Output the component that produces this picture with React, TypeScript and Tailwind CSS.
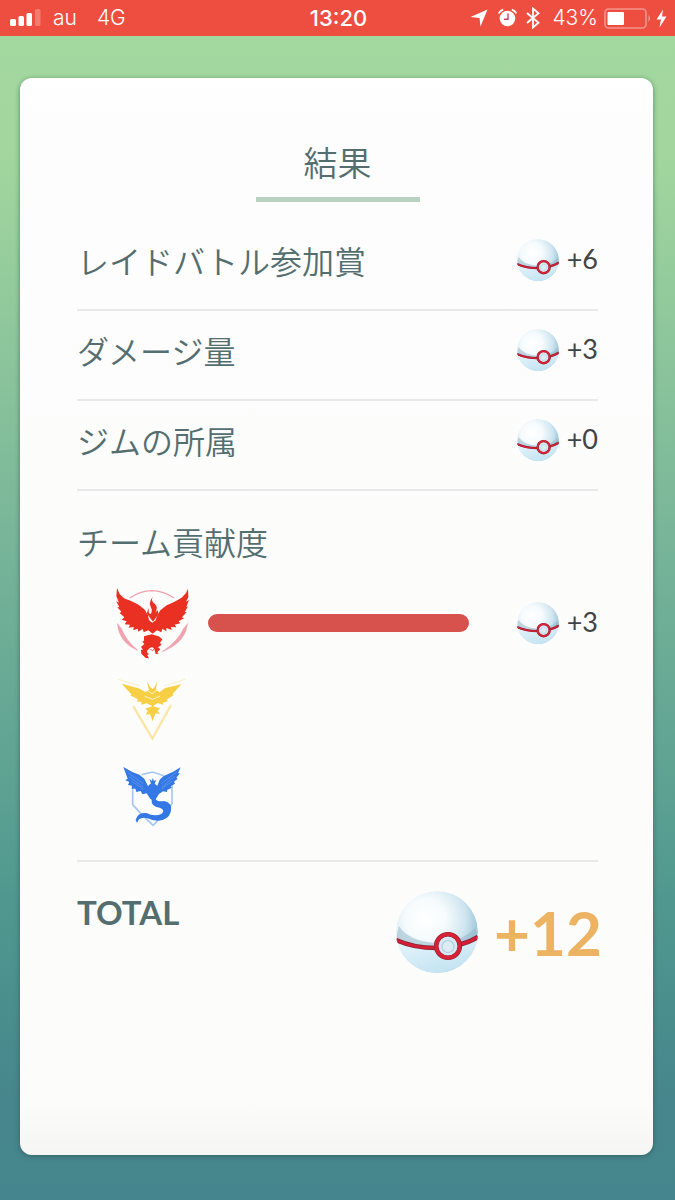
import React, {useId} from 'react';

const rewards = [
  {label: 'レイドバトル参加賞', amount: 6},
  {label: 'ダメージ量', amount: 3},
  {label: 'ジムの所属', amount: 0},
];

const StatusBar = () => (
  <header className="h-9 grid grid-cols-[1fr_auto_1fr] items-center bg-[#ee4e40] pl-[10px] pr-2 text-white text-[21px] leading-6 font-['Inter','Liberation_Sans',sans-serif]">
    <div className="flex items-center">
      <svg width="31" height="18" viewBox="0 0 31 18" fill="currentColor">
        <rect x="0" y="10" width="6" height="7" rx="1.5" />
        <rect x="8.5" y="7" width="5.5" height="10" rx="1.5" />
        <rect x="16.5" y="4" width="5.5" height="13" rx="1.5" />
        <rect x="25" y="0" width="5.5" height="17" rx="1.5" opacity=".25" />
      </svg>
      <span className="ml-3 font-light">au</span>
      <span className="ml-5 font-light">4G</span>
    </div>
    <span className="text-[22px] font-medium">13:20</span>
    <div className="flex items-center justify-end">
      <svg width="18" height="18" viewBox="0 0 18 18" fill="currentColor">
        <path d="M17.5 .5 10.5 17.5 9.5 9 .5 8z" />
      </svg>
      <svg className="ml-[10px]" width="19" height="20" viewBox="0 0 19 20">
        <circle cx="9.5" cy="10.5" r="7.8" fill="currentColor" />
        <path
          d="M.8 5.5Q2 2.5 5.2 1.6M18.2 5.5Q17 2.5 13.8 1.6"
          fill="none"
          stroke="currentColor"
          strokeWidth="1.8"
        />
        <path d="M10 5.5V11.3H6" fill="none" stroke="#c9406a" strokeWidth="1.4" />
      </svg>
      <svg
        className="ml-[9px]"
        width="14"
        height="22"
        viewBox="0 0 14 22"
        fill="none"
        stroke="currentColor"
        strokeWidth="1.8"
      >
        <path d="M1 6 12.5 15.8 7 20.5V1.5L12.5 6.2 1 16" />
      </svg>
      <span className="ml-3 font-light">43%</span>
      <svg className="ml-[6px]" width="48" height="21" viewBox="0 0 48 21">
        <rect
          x="1"
          y="1"
          width="41"
          height="19"
          rx="3.5"
          fill="none"
          stroke="#fff"
          strokeOpacity=".4"
          strokeWidth="1.6"
        />
        <rect x="3.5" y="4" width="16.5" height="13" rx="1" fill="#fff" />
        <path d="M44.5 7Q47.5 10.5 44.5 14z" fill="#fff" fillOpacity=".45" />
      </svg>
      <svg className="ml-1" width="11" height="19" viewBox="0 0 11 19" fill="currentColor">
        <path d="M7 .5 .5 10.5H5L3.5 18.5 10.5 7.5H6z" />
      </svg>
    </div>
  </header>
);

const Ball = ({className}: {className: string}) => {
  const id = useId();
  return (
    <svg className={className} viewBox="0 0 82 82">
      <defs>
        <radialGradient id={`${id}top`} cx=".36" cy=".34" r=".7">
          <stop offset="0" stopColor="#fff" />
          <stop offset=".35" stopColor="#f6fbfd" />
          <stop offset=".7" stopColor="#cfe5f0" />
          <stop offset="1" stopColor="#8fbcd2" />
        </radialGradient>
        <linearGradient id={`${id}low`} x1="0" y1="0" x2=".6" y2="1">
          <stop offset="0" stopColor="#e9f6fb" />
          <stop offset="1" stopColor="#c3e3f2" />
        </linearGradient>
        <clipPath id={`${id}clip`}>
          <circle cx="41" cy="41" r="41" />
        </clipPath>
      </defs>
      <g clipPath={`url(#${id}clip)`}>
        <circle cx="41" cy="41" r="41" fill={`url(#${id}top)`} />
        <path d="M3 35Q12 50 40 52Q66 51 79 37L82 48 60 54 38 57Q15 55 0 48z" fill="#8fb6c8" opacity=".5" />
        <path d="M0 49Q18 57 40 57Q66 57 82 46V82H0z" fill={`url(#${id}low)`} />
        <path d="M0 49Q18 57 40 57Q66 56 82 46" fill="none" stroke="#8b2738" strokeWidth="4.5" />
        <path d="M0 49Q18 57 40 57Q66 56 82 46" fill="none" stroke="#d51d33" strokeWidth="2.8" />
      </g>
      <circle cx="52" cy="55" r="11.8" fill="#d6eaf4" stroke="#8b2738" strokeWidth="4.6" />
      <circle cx="52" cy="55" r="11.7" fill="none" stroke="#d92135" strokeWidth="3.4" />
      <circle cx="52" cy="55.5" r="6" fill="#dcebf4" stroke="#b4cfde" strokeWidth="1.2" />
    </svg>
  );
};

const Reward = ({amount}: {amount: number}) => (
  <div className="flex items-center justify-between w-[81px] shrink-0">
    <Ball className="w-[42px] h-[42px]" />
    <span className="font-['Lato',sans-serif] font-normal text-[27px] leading-8 pb-[2px] text-[#414444]">
      +{amount}
    </span>
  </div>
);

const Valor = () => (
  <svg className="w-[95px] h-[87px] shrink-0" viewBox="0 -3 285 261">
    <g fill="none" stroke="#f0a3ae">
      <path d="M74 54Q105 33 140 32Q177 33 207 54" strokeWidth="4" />
      <path d="M37 130Q42 188 98 211Q62 181 48 143" strokeWidth="2" fill="#f0a3ae" />
      <path d="M248 130Q242 188 172 215Q222 181 237 143" strokeWidth="2" fill="#f0a3ae" />
    </g>
    <g fill="#ea3023">
      <path d="M36 24L44 42 57 55 80 64 102 75 119 89 129 106 132 121 142 128 152 121 156 107 166 91 185 76 207 66 230 53 243 39 249 26 250 52 243 65 252 60 244 81 249 79 239 97 245 96 231 112 237 115 221 124 226 130 209 134 214 142 198 141 200 150 184 144 184 154 172 146 169 157 156 151 143 161 130 151 116 157 113 147 100 155 98 146 85 151 86 141 71 143 75 134 59 133 65 124 50 119 58 112 44 99 49 95 37 82 43 81 33 63 42 68 34 49z" />
      <path d="M143 50Q137 64 149 71Q162 83 149 99L158 91Q163 101 154 111L144 125 131 108Q121 99 132 84Q128 97 136 103Q144 92 138 83Q130 68 143 50z" />
      <path d="M117 169L140 163 161 169 172 178 165 189 170 194 159 202 166 208 157 217 161 221 152 222 148 207 143 213 133 206Q119 215 132 222L127 226 132 235 122 234 109 221 108 209 114 209 108 201 118 192 112 185 117 182z" />
      <path d="M131 207Q141 197 147 206L142 211 138 207z" fill="#fff" />
    </g>
  </svg>
);

const Instinct = () => (
  <svg className="w-[95px] h-[87px] shrink-0" viewBox="0 -12 285 261">
    <g fill="none" stroke="#fae7a6">
      <path d="M40 28L105 48M240 28L178 48" strokeWidth="2" />
      <path d="M85 109L142 206 198 105" strokeWidth="7" />
    </g>
    <g fill="#f6cf45">
      <path d="M50 41L101 55 121 66 132 60 125 34 136 52 143 57 149 51 156 34 153 59 163 67 181 54 229 43 202 73 207 74 185 89 189 93 174 98 175 105 159 99 143 109 125 100 109 104 109 96 95 94 99 88 75 76 80 74z" />
      <path d="M121 116L143 108 165 115 158 123 164 132 151 130 143 154 135 132 123 134 128 123z" />
    </g>
    <path d="M119 79L143 88 165 78M126 60L141 72 157 59" fill="none" stroke="#fff3c5" strokeWidth="3" />
  </svg>
);

const Mystic = () => (
  <svg className="w-[95px] h-[87px] shrink-0" viewBox="0 -6 285 261">
    <path
      d="M110 59L143 51 176 62M83 93V149Q109 179 144 211L174 181M201 89V145L187 169"
      fill="none"
      stroke="#a5c7f4"
      strokeWidth="5"
    />
    <g fill="#3478e5">
      <path d="M55 36L82 51 103 59 118 71 129 93 138 85 133 72 141 78 143 68 147 78 154 74 149 86 157 92 164 74 176 63 203 51 227 37 219 55 225 55 214 68 218 71 207 80 210 86 197 94 200 99 187 104 186 111 174 109 162 117 150 136 136 132 125 115 112 118 107 108 94 111 91 101 80 101 81 92 69 90 73 81 61 76 68 71z" />
      <path d="M134 121L151 131Q156 141 178 138Q205 144 197 172Q186 204 142 195Q114 182 102 193L96 203 92 196Q97 171 124 174Q150 186 170 176Q182 164 164 158Q137 154 140 135z" />
    </g>
    <path
      d="M68 52L116 87M73 65L114 96M80 79L116 103M215 51L169 86M208 65L171 96M201 79L169 102"
      stroke="#7caaf0"
      strokeWidth="1.5"
    />
  </svg>
);

const App = () => {
  return (
    <div className="min-h-screen flex flex-col bg-[linear-gradient(to_bottom,#a3d89f_0%,#a2d69e_13%,#78b599_45%,#50988f_75%,#46868c_92%,#45858d_100%)]">
      <StatusBar />
      <main className="flex-1 flex flex-col mt-[42px] mb-[45px] ml-5 mr-[22px] pl-[57px] pr-[55px] pt-15 pb-10 rounded-xl bg-[linear-gradient(to_bottom,#fff_0,#fcfdfc_40px,#fcfcfb_95%,#f5f5f4_100%)] shadow-[0_1px_5px_rgba(40,80,70,0.6)] text-[#546e70] font-['Noto_Sans_CJK_JP',sans-serif] font-[350]">
        <h1 className="w-41 mx-auto pb-[11px] border-b-5 border-[#b9d1c1] text-center text-[34px] leading-12 font-[350]">
          結果
        </h1>
        <ul className="mt-[19px]">
          {rewards.map(({label, amount}) => (
            <li
              key={label}
              className="flex items-center justify-between pt-[18px] pb-7 border-b-2 border-[#e8e9e8]"
            >
              <span className="text-[32px] leading-[42px]">{label}</span>
              <Reward amount={amount} />
            </li>
          ))}
        </ul>
        <section className="pt-[26px] pb-5 border-b-2 border-[#e8e9e8]">
          <h2 className="text-[32px] leading-12 font-[350]">チーム貢献度</h2>
          <div className="mt-[14px] pl-7 flex flex-col">
            <div className="flex items-center">
              <Valor />
              <div className="flex-1 h-[18px] ml-2 mr-12 rounded-full bg-[#d7524d]" />
              <Reward amount={3} />
            </div>
            <Instinct />
            <Mystic />
          </div>
        </section>
        <div className="flex items-start justify-between pt-7 font-['Lato',sans-serif] font-bold">
          <span className="text-[33px] leading-11">TOTAL</span>
          <div className="flex items-center gap-4 -mr-1">
            <Ball className="w-[82px] h-[82px]" />
            <span className="text-[62px] leading-[84px] text-[#ecb362]">+12</span>
          </div>
        </div>
      </main>
    </div>
  );
};

export default App;
